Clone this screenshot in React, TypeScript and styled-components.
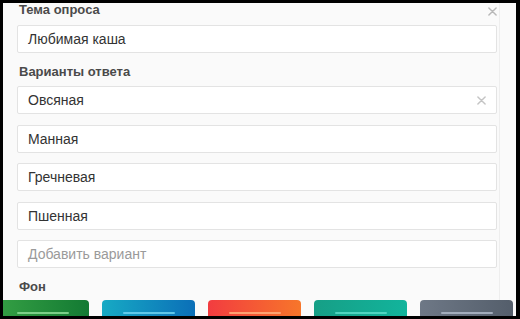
import React from "react";
import styled, { createGlobalStyle } from "styled-components";

const GlobalStyle = createGlobalStyle`
  html, body {
    margin: 0;
    padding: 0;
    background: #000;
  }
  body {
    font-family: "Liberation Sans", Arial, sans-serif;
  }
`;

interface Swatch {
  from: string;
  to: string;
  bar: string;
}

const swatches: Swatch[] = [
  { from: "#35a044", to: "#137a33", bar: "rgba(140, 220, 150, 0.85)" },
  { from: "#17aac4", to: "#0b6fb8", bar: "rgba(110, 210, 240, 0.85)" },
  { from: "#f23c40", to: "#f7762a", bar: "rgba(255, 170, 120, 0.9)" },
  { from: "#169f86", to: "#12b49c", bar: "rgba(90, 220, 200, 0.85)" },
  { from: "#6e7886", to: "#545e6b", bar: "rgba(170, 180, 195, 0.9)" },
];

const options = ["Овсяная", "Манная", "Гречневая", "Пшенная"];

const CloseIcon = ({ size = 9 }: { size?: number }) => (
  <Icon width={size} height={size} viewBox="0 0 10 10">
    <path d="M1 1 L9 9 M9 1 L1 9" />
  </Icon>
);

const App = () => (
  <>
    <GlobalStyle />
    <Frame>
      <Form>
        <Header>
          <Label $bottom={8}>Тема опроса</Label>
          <CloseButton>
            <CloseIcon />
          </CloseButton>
        </Header>
        <Field>
          <Value>Любимая каша</Value>
        </Field>

        <Label $top={12}>Варианты ответа</Label>
        <Options>
          {options.map((o, i) => (
            <Field key={o}>
              <Value>{o}</Value>
              {i === 0 && (
                <FieldClear>
                  <CloseIcon size={9} />
                </FieldClear>
              )}
            </Field>
          ))}
          <Field>
            <Value $placeholder>Добавить вариант</Value>
          </Field>
        </Options>

        <Label $top={12} $bottom={6}>
          Фон
        </Label>
      </Form>
      <Swatches>
        {swatches.map((s, i) => (
          <Card key={i} $from={s.from} $to={s.to}>
            <CardBar $color={s.bar} />
          </Card>
        ))}
      </Swatches>
    </Frame>
  </>
);

export default App;

const Frame = styled.div`
  margin: 3px 4px 0 3px;
  height: 313px;
  background: #fafafa;
  overflow: hidden;
  display: flex;
  flex-direction: column;
`;

const Form = styled.div`
  width: 480px;
  padding: 0 2px 0 14px;
  border-right: 1px solid #eeeeee;
  display: flex;
  flex-direction: column;
`;

const Header = styled.div`
  display: flex;
  align-items: flex-start;
  justify-content: space-between;
`;

const Label = styled.div<{ $top?: number; $bottom?: number }>`
  margin-top: ${({ $top }) => $top ?? 0}px;
  margin-bottom: ${({ $bottom }) => $bottom ?? 7}px;
  padding-left: 2px;
  font-size: 13px;
  font-weight: 700;
  color: #4a4a4a;
  line-height: 14px;
`;

const CloseButton = styled.div`
  display: flex;
  padding-top: 4px;
  color: #b8b8b8;
`;

const Icon = styled.svg`
  fill: none;
  stroke: currentColor;
  stroke-width: 1.6px;
  stroke-linecap: round;
`;

const Options = styled.div`
  display: flex;
  flex-direction: column;
  gap: 10.5px;
`;

const Field = styled.div`
  flex: 0 0 auto;
  height: 26px;
  border: 1px solid #e3e3e3;
  border-radius: 2px;
  background: #fff;
  display: flex;
  align-items: center;
  justify-content: space-between;
  padding: 0 10px;
`;

const Value = styled.span<{ $placeholder?: boolean }>`
  font-size: 14px;
  color: ${({ $placeholder }) => ($placeholder ? "#9a9a9a" : "#333")};
`;

const FieldClear = styled.span`
  display: flex;
  color: #c4c4c4;
`;

const Swatches = styled.div`
  flex: 0 0 auto;
  display: flex;
  gap: 13px;
  margin-left: -7px;
  height: 22px;
`;

const Card = styled.div<{ $from: string; $to: string }>`
  flex: 0 0 93px;
  border-radius: 4px 4px 0 0;
  background: linear-gradient(90deg, ${({ $from }) => $from}, ${({ $to }) => $to});
  display: flex;
  justify-content: center;
  align-items: flex-start;
  padding-top: 12px;
  box-sizing: border-box;
`;

const CardBar = styled.div<{ $color: string }>`
  width: 52px;
  height: 2px;
  border-radius: 1px;
  background: ${({ $color }) => $color};
`;
